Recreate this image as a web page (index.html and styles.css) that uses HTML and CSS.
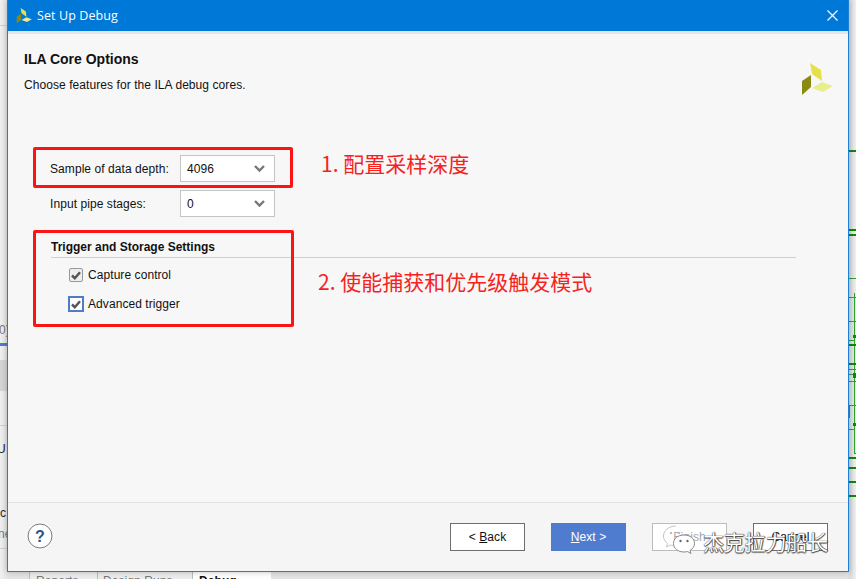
FILE: index.html
```html
<!DOCTYPE html>
<html lang="en">
<head>
<meta charset="utf-8">
<title>Set Up Debug</title>
<link rel="stylesheet" href="styles.css">
</head>
<body>
<div class="desktop">
  <svg class="backdrop" width="856" height="579" viewBox="0 0 856 579">
    <rect x="0" y="343" width="8" height="3" fill="#4f7cc9"/>
    <rect x="0" y="360" width="8" height="31" fill="#d4d4d4"/>
    <rect x="0" y="25" width="8" height="1" fill="#cfcfcf"/>
    <rect x="0" y="425" width="8" height="1" fill="#d0d0d0"/>
    <rect x="0" y="548" width="8" height="1" fill="#d0d0d0"/>
    <g fill="#0b8a0b">
      <rect x="849" y="150" width="7" height="2"/>
      <rect x="849" y="229" width="7" height="2"/>
      <rect x="849" y="234" width="7" height="2"/>
      <rect x="849" y="278" width="7" height="1" fill="#2aa52a"/>
      <rect x="849" y="297" width="7" height="1" fill="#2aa52a"/>
      <rect x="854" y="293" width="1" height="160" fill="#2aa52a"/>
      <rect x="849" y="321" width="7" height="1" fill="#2aa52a"/>
      <rect x="853" y="335" width="3" height="3"/>
      <rect x="849" y="344" width="7" height="2"/>
      <rect x="849" y="340" width="5" height="1" fill="#2aa52a"/>
      <rect x="849" y="363" width="7" height="2"/>
      <rect x="849" y="369" width="7" height="1" fill="#2aa52a"/>
      <rect x="849" y="374" width="7" height="1" fill="#2aa52a"/>
      <rect x="853" y="373" width="3" height="5"/>
      <rect x="849" y="381" width="7" height="1" fill="#2aa52a"/>
      <rect x="849" y="405" width="7" height="1" fill="#2aa52a"/>
      <rect x="849" y="405" width="1" height="13" fill="#2aa52a"/>
      <rect x="853" y="423" width="3" height="3"/>
      <rect x="849" y="429" width="6" height="1" fill="#2aa52a"/>
      <rect x="854" y="453" width="2" height="1" fill="#2aa52a"/>
      <rect x="849" y="457" width="7" height="2"/>
      <rect x="849" y="467" width="7" height="2"/>
      <rect x="849" y="481" width="7" height="2"/>
      <rect x="849" y="495" width="7" height="2"/>
    </g>
  </svg>
  <span class="peek peek-a">0)</span>
  <span class="peek peek-b">U</span>
  <span class="peek peek-c">c</span>
  <span class="peek peek-d">ne</span>
  <div class="tabs">
    <span class="tab">Reports</span>
    <span class="tab tab-wide">Design Runs</span>
    <span class="tab tab-active">Debug</span>
  </div>

  <section class="dialog">
    <header class="titlebar">
      <svg class="title-logo" width="17" height="16" viewBox="802 63 32 33">
        <polygon points="810,63 821,70 822,81 812,74" fill="#e6e04a"/>
        <polygon points="811,75 802,81 802,95 811,87" fill="#8a8a10"/>
        <polygon points="812,88 822,82 833,86 823,92" fill="#e9ee8c"/>
      </svg>
      <span class="title-text">Set Up Debug</span>
      <svg class="close" width="11" height="11" viewBox="0 0 11 11">
        <path d="M.5 .5 10.5 10.5M10.5 .5 .5 10.5" stroke="#fff" stroke-width="1.2" fill="none"/>
      </svg>
    </header>
    <div class="content">
      <div class="intro">
        <div>
          <h1 class="page-title">ILA Core Options</h1>
          <p class="page-sub">Choose features for the ILA debug cores.</p>
        </div>
        <svg class="brand" width="32" height="33" viewBox="802 63 32 33">
          <polygon points="810,63 821,70 822,81 812,74" fill="#e6e04a"/>
          <polygon points="811,75 802,81 802,95 811,87" fill="#8a8a10"/>
          <polygon points="812,88 822,82 833,86 823,92" fill="#e9ee8c"/>
        </svg>
      </div>
      <div class="form">
        <div class="field">
          <span class="field-label">Sample of data depth:</span>
          <span class="select">4096<svg class="chev" width="11" height="7" viewBox="0 0 11 7"><path d="M1 1 5.500 5.500 10 1" stroke="#777" stroke-width="2.400" fill="none"/></svg></span>
        </div>
        <div class="field">
          <span class="field-label">Input pipe stages:</span>
          <span class="select">0<svg class="chev" width="11" height="7" viewBox="0 0 11 7"><path d="M1 1 5.500 5.500 10 1" stroke="#777" stroke-width="2.400" fill="none"/></svg></span>
        </div>
        <h2 class="group-title">Trigger and Storage Settings</h2>
        <div class="check">
          <span class="box"><svg width="10" height="9" viewBox="0 0 10 9"><path d="M1 4.500 3.800 7.200 9 1.200" stroke="#555" stroke-width="2.500" fill="none"/></svg></span>
          <span>Capture control</span>
        </div>
        <div class="check check-focus">
          <span class="box"><svg width="10" height="9" viewBox="0 0 10 9"><path d="M1 4.500 3.800 7.200 9 1.200" stroke="#555" stroke-width="2.500" fill="none"/></svg></span>
          <span>Advanced trigger</span>
        </div>
      </div>
      <footer class="footer">
        <svg class="help" width="26" height="26" viewBox="0 0 26 26">
          <circle cx="13" cy="13" r="12" fill="#fff" stroke="#7a7a7a" stroke-width="1"/>
          <text x="13" y="18.500" text-anchor="middle" class="help-mark">?</text>
        </svg>
        <div class="buttons">
          <span class="btn">&lt; <u>B</u>ack</span>
          <span class="btn btn-primary"><u>N</u>ext &gt;</span>
          <span class="btn btn-disabled">Finish</span>
          <span class="btn">Cancel</span>
        </div>
      </footer>
    </div>
  </section>

  <div class="mark mark-1"></div>
  <div class="mark mark-2"></div>
  <div class="note note-1">1. 配置采样深度</div>
  <div class="note note-2">2. 使能捕获和优先级触发模式</div>

  <svg class="wm-icon" width="34" height="32" viewBox="0 0 34 32">
    <path d="M14 2C7 2 1.500 6.500 1.500 12c0 3 1.500 5.500 4 7.500L4.500 23l4-2c1.500 .5 3 .8 5 .8 1 0 1.500 0 2.500-.2" fill="none" stroke="#c4c4c4" stroke-width="1"/>
    <path d="M22 11c-6 0-10.500 3.500-10.500 8.500S16 28 22 28c1.200 0 2.500-.2 3.500-.5l3.500 2-1-3c2.500-1.500 4.500-4 4.500-7C32.500 14.500 28 11 22 11Z" fill="#fff" stroke="#8a8a8a" stroke-width="1"/>
    <circle cx="9" cy="9" r="1.200" fill="#bbb"/><circle cx="17" cy="9" r="1.200" fill="#bbb"/>
    <circle cx="18.500" cy="17" r="1.200" fill="#666"/><circle cx="25.500" cy="17" r="1.200" fill="#666"/>
  </svg>
  <div class="wm-text">杰克拉力船长</div>
</div>
</body>
</html>
```
FILE: styles.css
```css
* { box-sizing: border-box; }
html, body { margin: 0; padding: 0; }
body { width: 856px; height: 579px; overflow: hidden; font-family: "Liberation Sans", Arial, sans-serif; font-size: 12px; letter-spacing: .07px; color: #111; }

.desktop { position: relative; width: 856px; height: 579px; overflow: hidden; background: linear-gradient(90deg, #f0f0f0 0, #e4e4e4 8px, #e4e4e4 848px, #d8d8d8 850px, #f0f0f0 856px); }
.backdrop { position: absolute; left: 0; top: 0; }

.peek { position: absolute; font-size: 12px; line-height: 14px; color: #222; }
.peek-a { left: -1px; top: 323px; color: #777; }
.peek-b { left: -3px; top: 442px; }
.peek-c { left: 0; top: 506px; }
.peek-d { left: -2px; top: 527px; color: #777; }

.tabs { position: absolute; left: 29px; top: 572px; height: 7px; display: flex; overflow: hidden; background: #ececec; }
.tab { width: 68px; padding: 2px 0 0 6px; border-left: 1px solid #bdbdbd; color: #777; font-size: 12px; line-height: 14px; }
.tab-wide { width: 95px; padding-left: 5px; }
.tab-active { width: 79px; background: #fff; color: #111; font-weight: bold; }

.dialog { position: absolute; left: 7px; top: 0; width: 842px; height: 572px; display: flex; flex-direction: column; background: #f7f7f7; border: 1px solid #1a7fd6; border-top: 0; box-shadow: 0 0 6px rgba(0, 0, 0, .25); }
.titlebar { flex: none; height: 31px; display: flex; align-items: center; padding: 0 9px 0 8px; background: #0078d7; color: #fff; }
.title-logo { margin-right: 4px; }
.title-text { font-family: "Open Sans", "Noto Sans", sans-serif; font-size: 12.500px; letter-spacing: .1px; }
.close { margin-left: auto; margin-right: 1px; }

.content { flex: 1; display: flex; flex-direction: column; border-top: 3px solid #e6e6e6; }
.intro { flex: none; display: flex; justify-content: space-between; padding: 17px 14px 0 16px; height: 121px; }
.page-title { margin: 0; font-size: 14px; line-height: 16px; font-weight: bold; color: #111; letter-spacing: 0; }
.page-sub { margin: 11px 0 0; font-size: 12px; line-height: 14px; }
.brand { margin-top: 12px; }

.form { flex: 1; padding: 0 0 0 42px; }
.field { display: flex; align-items: center; height: 27px; margin-bottom: 8px; }
.field-label { width: 130px; }
.select { width: 95px; height: 27px; display: flex; align-items: center; justify-content: space-between; padding: 0 9px 0 6px; background: #fff; border: 1px solid #c4c4c4; }
.group-title { margin: 23px 0 0 1px; width: 745px; height: 18px; font-size: 12px; line-height: 14px; font-weight: bold; letter-spacing: 0; border-bottom: 1px solid #d0d0d0; }
.check { display: flex; align-items: center; gap: 5px; height: 16px; margin: 9px 0 0 19px; }
.check-focus { margin-top: 13px; margin-left: 18px; gap: 4px; }
.box { width: 14px; height: 14px; display: flex; align-items: center; justify-content: center; background: #eee; border: 1px solid #999; border-radius: 2px; }
.check-focus .box { width: 16px; height: 16px; border: 2px solid #4f7cc9; border-radius: 0; background: #fff; }

.footer { flex: none; height: 69px; display: flex; align-items: center; padding: 0 20px 0 19px; background: #f5f5f5; border-top: 1px solid #e2e2e2; }
.help { margin-top: -3px; }
.help-mark { font-family: "Liberation Sans", sans-serif; font-size: 16px; font-weight: bold; fill: #2f4f8f; }
.buttons { margin-left: auto; display: flex; gap: 26px; }
.btn { width: 75px; height: 28px; display: flex; align-items: center; justify-content: center; white-space: pre; background: #fff; border: 1px solid #6e6e6e; color: #111; }
.btn-primary { background: #4f7ccf; border-color: #4f7ccf; color: #fff; }
.btn-disabled { border-color: #bcbcbc; color: #a8a8a8; }

.mark { position: absolute; border: 3px solid #fc1414; border-radius: 2px; }
.mark-1 { left: 33px; top: 147px; width: 260px; height: 41px; }
.mark-2 { left: 33px; top: 230px; width: 261px; height: 97px; }
.note { position: absolute; color: #f5231c; font-family: "Noto Sans CJK SC", "Liberation Sans", sans-serif; font-size: 21px; line-height: 26px; white-space: nowrap; letter-spacing: 0; }
.note-1 { left: 321px; top: 150px; }
.note-2 { left: 318px; top: 268px; }

.wm-icon { position: absolute; left: 662px; top: 524px; }
.wm-text { position: absolute; left: 703px; top: 527px; color: #fff; font-family: "Noto Sans CJK SC", sans-serif; font-size: 21px; line-height: 28px; white-space: nowrap; letter-spacing: -.2px; text-shadow: 0 0 1px #222, 1px 0 1px #444, 0 1px 1px #444; }
```
